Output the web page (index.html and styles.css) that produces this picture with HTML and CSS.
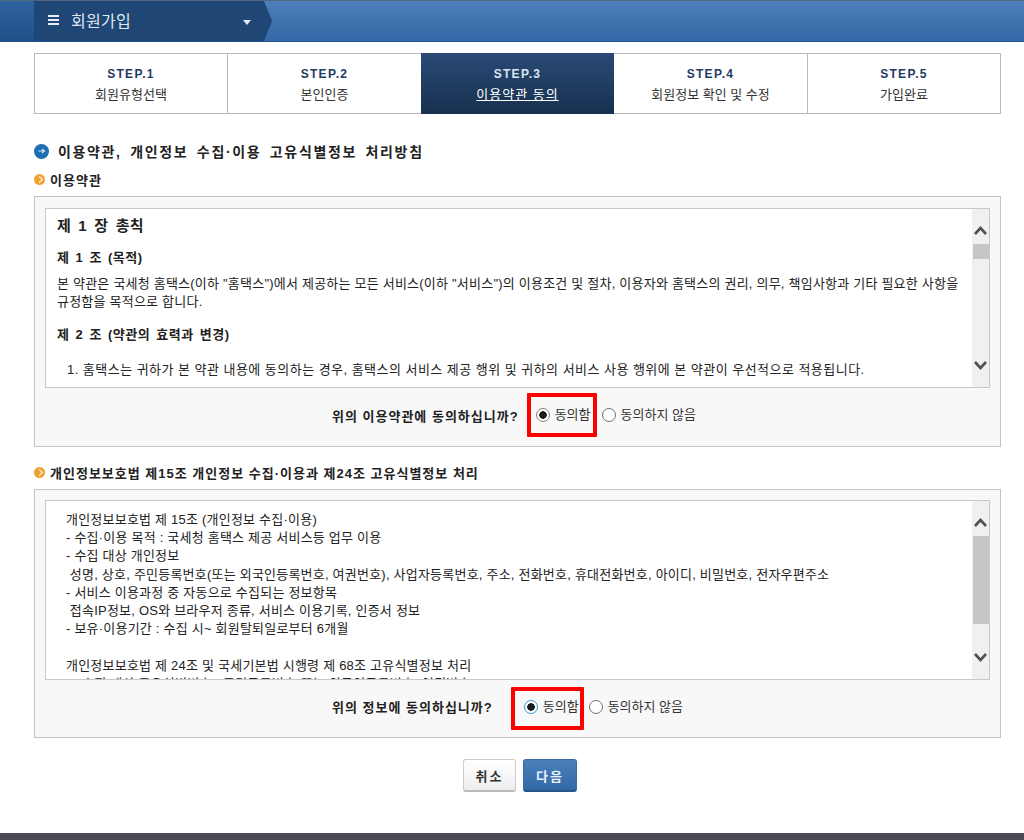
FILE: index.html
```html
<!DOCTYPE html>
<html lang="ko">

<head>
  <meta charset="UTF-8" />
  <title>회원가입</title>
  <link rel="stylesheet" href="styles.css">
</head>

<body>

  <header class="topbar">
    <div class="topbar-menu">
      <span class="burger"><i></i><i></i><i></i></span>
      <span class="topbar-title">회원가입</span>
      <span class="caret"></span>
    </div>
  </header>

  <div class="container">
    <ul class="steps">
      <li><b>STEP.1</b><span>회원유형선택</span></li>
      <li><b>STEP.2</b><span>본인인증</span></li>
      <li class="on"><b>STEP.3</b><span>이용약관 동의</span></li>
      <li><b>STEP.4</b><span>회원정보 확인 및 수정</span></li>
      <li><b>STEP.5</b><span>가입완료</span></li>
    </ul>

    <h3 class="title"><span class="title-icon"><svg width="8" height="8" viewBox="0 0 8 8"><path d="M0.5 4H6M4 2l2.5 2L4 6" fill="none" stroke="#d5e6f7" stroke-width="1.2"/></svg></span>이용약관, 개인정보 수집·이용 고유식별정보 처리방침</h3>

    <!-- 이용약관 -->
    <h4 class="subtitle"><span class="sub-icon"></span>이용약관</h4>
    <div class="box">
      <div class="scroll-wrap">
        <div class="scroll-text terms">
          <p class="chapter">제 1 장 총칙</p>
          <p class="article">제 1 조 (목적)</p>
          <p>본 약관은 국세청 홈택스(이하 "홈택스")에서 제공하는 모든 서비스(이하 "서비스")의 이용조건 및 절차, 이용자와 홈택스의 권리, 의무, 책임사항과 기타 필요한 사항을 규정함을 목적으로 합니다.</p>
          <p class="article second">제 2 조 (약관의 효력과 변경)</p>
          <p class="item">1. 홈택스는 귀하가 본 약관 내용에 동의하는 경우, 홈택스의 서비스 제공 행위 및 귀하의 서비스 사용 행위에 본 약관이 우선적으로 적용됩니다.</p>
        </div>
        <div class="scrollbar">
          <svg class="arrow" width="17" height="35" viewBox="0 0 17 35"><path d="M3 25l5.5-6 5.5 6" fill="none" stroke="#505050" stroke-width="2.6"/></svg>
          <div class="track"><div class="thumb thumb-small"></div></div>
          <svg class="arrow" width="17" height="35" viewBox="0 0 17 35"><path d="M3 10l5.5 6 5.5-6" fill="none" stroke="#505050" stroke-width="2.6"/></svg>
        </div>
      </div>
      <div class="agree">
        <strong>위의 이용약관에 동의하십니까?</strong>
        <label class="choice marked mark-a"><input type="radio" name="agree1" class="grey" checked>동의함</label>
        <label class="choice"><input type="radio" name="agree1">동의하지 않음</label>
      </div>
    </div>

    <!-- 개인정보 -->
    <h4 class="subtitle second"><span class="sub-icon"></span>개인정보보호법 제15조 개인정보 수집·이용과 제24조 고유식별정보 처리</h4>
    <div class="box box-b">
      <div class="scroll-wrap">
        <div class="scroll-text privacy">
          <p>개인정보보호법 제 15조 (개인정보 수집·이용)</p>
          <p>- 수집·이용 목적 : 국세청 홈택스 제공 서비스등 업무 이용</p>
          <p>- 수집 대상 개인정보</p>
          <p>&nbsp;성명, 상호, 주민등록번호(또는 외국인등록번호, 여권번호), 사업자등록번호, 주소, 전화번호, 휴대전화번호, 아이디, 비밀번호, 전자우편주소</p>
          <p>- 서비스 이용과정 중 자동으로 수집되는 정보항목</p>
          <p>&nbsp;접속IP정보, OS와 브라우저 종류, 서비스 이용기록, 인증서 정보</p>
          <p>- 보유·이용기간 : 수집 시~ 회원탈퇴일로부터 6개월</p>
          <p>&nbsp;</p>
          <p>개인정보보호법 제 24조 및 국세기본법 시행령 제 68조 고유식별정보 처리</p>
          <p>&nbsp;&nbsp;- 수집 대상 고유식별번호 : 주민등록번호(또는 외국인등록번호, 여권번호)</p>
        </div>
        <div class="scrollbar">
          <svg class="arrow" width="17" height="35" viewBox="0 0 17 35"><path d="M3 25l5.5-6 5.5 6" fill="none" stroke="#505050" stroke-width="2.6"/></svg>
          <div class="track"><div class="thumb thumb-big"></div></div>
          <svg class="arrow" width="17" height="35" viewBox="0 0 17 35"><path d="M3 10l5.5 6 5.5-6" fill="none" stroke="#505050" stroke-width="2.6"/></svg>
        </div>
      </div>
      <div class="agree">
        <strong>위의 정보에 동의하십니까?</strong>
        <label class="choice marked mark-b"><input type="radio" name="agree2" checked>동의함</label>
        <label class="choice"><input type="radio" name="agree2">동의하지 않음</label>
      </div>
    </div>

    <div class="buttons">
      <button type="button" class="btn">취소</button>
      <button type="button" class="btn btn-blue">다음</button>
    </div>
  </div>

  <footer class="footer"></footer>

</body>

</html>
```

FILE: styles.css
```css
* {
  margin: 0;
  padding: 0;
  box-sizing: border-box;
}

html,
body {
  height: 840px;
  overflow: hidden;
}

body {
  font-family: "Liberation Sans", "Noto Sans CJK KR", sans-serif;
  font-size: 13px;
  color: #222;
  background-color: #fff;
}

/* topbar */
.topbar {
  height: 42px;
  padding-left: 34px;
  border-top: 1px solid #51677f;
  border-bottom: 1px solid #1c5494;
  background: linear-gradient(#4c7fba, #3368a6);
  position: relative;
  overflow: hidden;
}

.topbar::before {
  content: "";
  position: absolute;
  left: 0;
  top: 0;
  width: 40px;
  height: 100%;
  background: linear-gradient(#2f639f, #1f5089);
}

.topbar-menu {
  position: relative;
  width: 238px;
  height: 100%;
  display: flex;
  align-items: center;
  padding: 0 21px 2px 14px;
  background: #1f4674;
  clip-path: polygon(0 0, 230px 0, 238px 50%, 230px 100%, 0 100%);
}

.burger {
  display: flex;
  flex-direction: column;
  gap: 2px;
  width: 11px;
  margin-right: 12px;
}

.burger i {
  height: 2px;
  background: #e6edf5;
}

.topbar-title {
  flex: 1;
  font-size: 16px;
  letter-spacing: 0.3px;
  color: #dfe8f2;
}

.caret {
  border-top: 5px solid #e6edf5;
  border-left: 4px solid transparent;
  border-right: 4px solid transparent;
  margin-top: 4px;
}

.container {
  width: 967px;
  margin: 11px 0 0 34px;
}

/* steps */
.steps {
  display: grid;
  grid-template-columns: 192px 194px 193px 193px 1fr;
  height: 61px;
  list-style: none;
  border: 1px solid #b4bac2;
}

.steps li {
  display: flex;
  flex-direction: column;
  align-items: center;
  padding-top: 11px;
  border-left: 1px solid #b4bac2;
  color: #333;
}

.steps li:first-child {
  border-left: none;
}

.steps b {
  font-size: 12px;
  letter-spacing: 1.3px;
  line-height: 18px;
  margin-bottom: 3px;
  color: #1f3a62;
}

.steps span {
  line-height: 18px;
}

.steps .on {
  margin: -1px 0;
  padding-top: 12px;
  border-left: none;
  background: linear-gradient(#2a4a76, #17304f);
}

.steps .on + li {
  border-left: none;
}

.steps .on b {
  color: #dce6f0;
}

.steps .on span {
  letter-spacing: 1px;
  color: #fff;
  text-decoration: underline;
}

/* headings */
.title {
  display: flex;
  align-items: center;
  margin-top: 28px;
  height: 18px;
  font-size: 14px;
  font-weight: 700;
  letter-spacing: 1.65px;
  word-spacing: 3px;
  color: #222;
}

.title-icon {
  display: flex;
  align-items: center;
  justify-content: center;
  width: 15px;
  height: 15px;
  margin-right: 9px;
  border-radius: 50%;
  background: #1f6cb0;
}

.subtitle {
  display: flex;
  align-items: center;
  margin-top: 10px;
  height: 18px;
  font-size: 13px;
  font-weight: 700;
  letter-spacing: 1px;
  color: #222;
}

.subtitle.second {
  margin-top: 16px;
}

.sub-icon {
  width: 11px;
  height: 11px;
  margin-right: 5px;
  border-radius: 50%;
  background: #f0a22e;
  position: relative;
}

.sub-icon::after {
  content: "";
  position: absolute;
  left: 3px;
  top: 3px;
  width: 4px;
  height: 4px;
  border-top: 1px solid #fff;
  border-right: 1px solid #fff;
  transform: rotate(45deg);
}

/* boxes */
.box {
  margin-top: 8px;
  padding: 11px 10px 4px;
  border: 1px solid #c4c4c4;
  background-color: #f8f8f8;
}

.box-b {
  padding-top: 10px;
}

.box-b .agree {
  height: 53px;
}

.box-b .agree strong {
  margin-right: 31px;
}

.box-b .choice {
  margin-right: 10px;
}

.scroll-wrap {
  display: flex;
  height: 180px;
  border: 1px solid #c8c8c8;
  background: #fff;
}

.scroll-text {
  flex: 1;
  overflow: hidden;
  line-height: 18px;
  letter-spacing: 0.22px;
}

.terms {
  padding: 8px 10px 0 11px;
}

.terms .chapter {
  font-size: 15px;
  font-weight: 700;
  letter-spacing: 0.2px;
  word-spacing: 3px;
  line-height: 18px;
  margin-bottom: 14px;
}

.terms .article {
  font-weight: 700;
  letter-spacing: 0.5px;
  word-spacing: 2px;
  margin-bottom: 8px;
}

.terms .article.second {
  margin-top: 15px;
  margin-bottom: 17px;
}

.terms .item {
  padding-left: 10px;
  letter-spacing: 0.47px;
}

.privacy {
  padding: 10px 10px 0 20px;
  line-height: 18.2px;
}

.scrollbar {
  display: flex;
  flex-direction: column;
  width: 17px;
  background: #f0f0f0;
}

.arrow {
  display: block;
  flex: none;
}

.track {
  flex: 1;
}

.thumb {
  margin-left: 1px;
  background: #c6c6c6;
}

.thumb-small {
  height: 15px;
}

.thumb-big {
  height: 88px;
}

/* agree */
.agree {
  display: flex;
  align-items: center;
  height: 54px;
  padding-left: 287px;
}

.agree strong {
  letter-spacing: 1px;
  margin-right: 17px;
}

.choice {
  display: flex;
  align-items: center;
  position: relative;
  margin-right: 11px;
  line-height: 18px;
  color: #333;
}

.choice input {
  appearance: none;
  width: 14px;
  height: 14px;
  margin-right: 5px;
  border: 1px solid #707070;
  border-radius: 50%;
  background: #fff;
}

.choice input:checked {
  border: 1px solid #2f9fd0;
  background: radial-gradient(circle, #1c1c1c 3.5px, #fff 4px);
}

.choice input.grey:checked {
  border-color: #808080;
}

/* red annotation */
.marked::after {
  content: "";
  position: absolute;
  box-sizing: border-box;
  border: 4px solid #f00;
  border-radius: 1px;
}

.mark-a::after {
  left: -9px;
  top: -13px;
  width: 70px;
  height: 44px;
}

.mark-b::after {
  left: -13px;
  top: -11px;
  width: 73px;
  height: 43px;
}

/* buttons */
.buttons {
  display: flex;
  justify-content: center;
  gap: 7px;
  margin-top: 21px;
  padding-left: 5px;
}

.btn {
  width: 53px;
  height: 33px;
  font-family: inherit;
  font-size: 13px;
  font-weight: 700;
  letter-spacing: 2px;
  color: #333;
  border: 1px solid #ccc;
  border-bottom: 2px solid #bbb;
  border-radius: 3px;
  background: linear-gradient(#fff, #eee);
}

.btn-blue {
  width: 54px;
  color: #e8f0f8;
  border: 1px solid #3a6ba6;
  border-bottom: 2px solid #27528a;
  background: linear-gradient(#4a7fbb, #3469a8);
}

.footer {
  position: absolute;
  left: 0;
  right: 0;
  top: 833px;
  height: 7px;
  background: #4a4a52;
}
```
